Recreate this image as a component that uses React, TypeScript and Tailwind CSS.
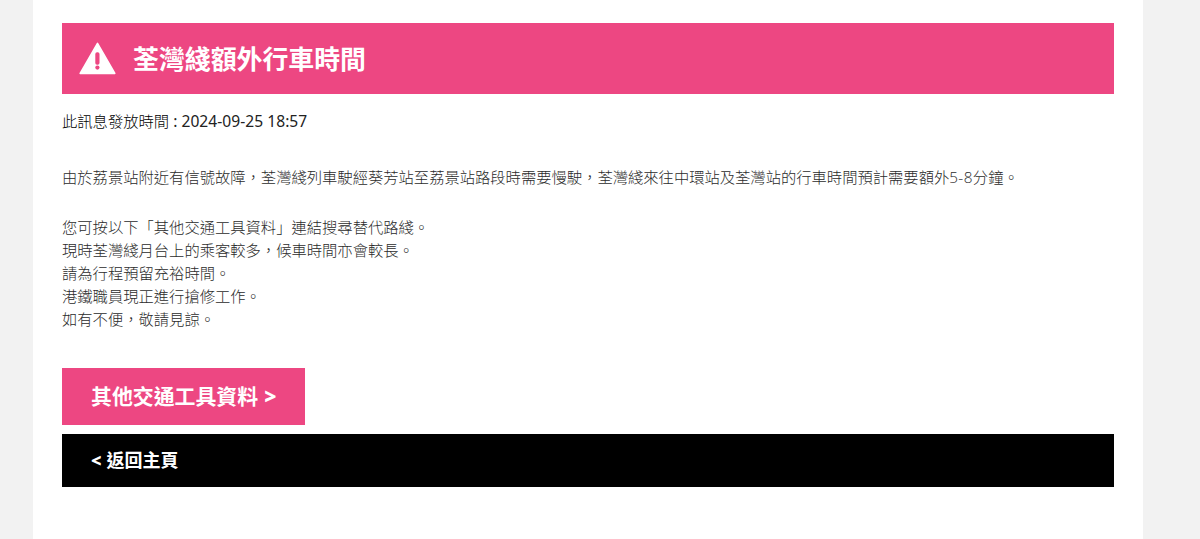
const DETAILS = [
  '您可按以下「其他交通工具資料」連結搜尋替代路綫。',
  '現時荃灣綫月台上的乘客較多，候車時間亦會較長。',
  '請為行程預留充裕時間。',
  '港鐵職員現正進行搶修工作。',
  '如有不便，敬請見諒。',
];

function WarningIcon() {
  return (
    <svg className="shrink-0" width="37" height="33" viewBox="0 0 37 33" aria-hidden="true">
      <path
        d="M18.5 1.4 L35.8 31.4 H1.2 Z"
        fill="#fff"
        stroke="#fff"
        strokeWidth="1.6"
        strokeLinejoin="round"
      />
      <rect x="16.3" y="10.3" width="4.2" height="12.4" rx="1.8" fill="#ed4782" />
      <circle cx="18.4" cy="25.6" r="2.1" fill="#ed4782" />
    </svg>
  );
}

export default function App() {
  return (
    <div className="h-[539px] overflow-hidden bg-[#f2f2f2] pl-[33px] pr-[57px] font-['Open_Sans','Noto_Sans_CJK_TC',sans-serif]">
      <main lang="zh-HK" className="h-full bg-white pl-[29px] pr-[29px] pt-[23px]">
        <header className="flex h-[71px] items-center bg-[#ed4782] pl-[17px] text-white">
          <WarningIcon />
          <h1 className="ml-[17px] whitespace-nowrap text-[25.9px] leading-9 font-bold">荃灣綫額外行車時間</h1>
        </header>

        <p className="mt-4 h-[23px] whitespace-nowrap text-[15.3px] leading-[23px] font-light text-black">
          此訊息發放時間<span className="font-['Noto_Sans'] text-[15.6px] font-normal tracking-[0.03px] text-[#222]"> : 2024-09-25 18:57</span>
        </p>

        <div className="mt-[33px] whitespace-nowrap text-[15.3px] leading-[23px] font-light text-[#2b2b2b]">
          <p>
            由於荔景站附近有信號故障，荃灣綫列車駛經葵芳站至荔景站路段時需要慢駛，荃灣綫來往中環站及荃灣站的行車時間預計需要額外
            <span className="tracking-[0.4px]">5-8</span>分鐘。
          </p>
          <div className="mt-[27px]">
            {DETAILS.map((line) => (
              <p key={line}>{line}</p>
            ))}
          </div>
        </div>

        <a
          href="#transport"
          className="mt-[37px] flex h-[57px] w-[243px] items-center whitespace-nowrap bg-[#ed4782] pl-[29px] pt-px text-[20.9px] font-bold text-white"
        >
          其他交通工具資料<span className="ml-[6px] font-extrabold">&gt;</span>
        </a>
        <a
          href="#home"
          className="mt-[9px] flex h-[53px] items-center whitespace-nowrap bg-black pl-[29px] text-[18px] font-bold text-white"
        >
          <span className="mr-[5px] font-extrabold">&lt;</span>返回主頁
        </a>
      </main>
    </div>
  );
}
